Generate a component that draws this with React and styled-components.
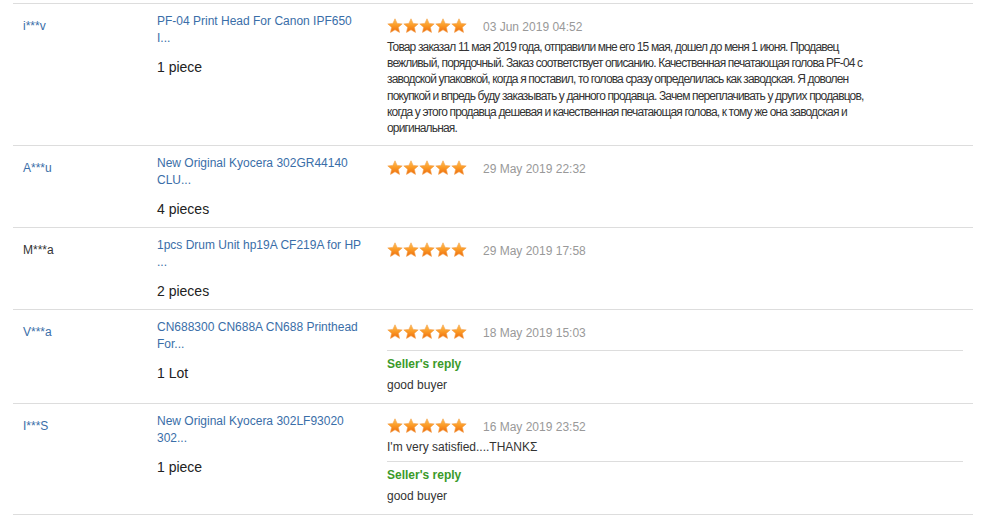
import React from 'react';
import styled, { createGlobalStyle } from 'styled-components';

const GlobalStyle = createGlobalStyle`
	html, body {
		margin: 0;
		padding: 0;
		background: #fff;
	}
	body {
		font-family: "Liberation Sans", Arial, sans-serif;
		color: #333;
	}
`;

const List = styled.div`
	padding: 3px 15px 0 13px;
	width: 960px;
`;

const Row = styled.div`
	display: grid;
	grid-template-columns: 144px 230px 1fr;
	border-top: 1px solid #ddd;
	padding: 9px 0 8px 0;
	&:last-child {
		border-bottom: 1px solid #ddd;
	}
`;

const Buyer = styled.div`
	padding: 5px 0 0 10px;
	font-size: 12px;
	line-height: 16px;
	color: ${props => props.plain ? '#333' : '#3a6ea8'};
`;

const Product = styled.div`
	display: flex;
	flex-direction: column;
`;

const Title = styled.a`
	display: block;
	width: 207px;
	font-size: 12px;
	line-height: 17px;
	color: #3a6ea8;
	text-decoration: none;
`;

const Quantity = styled.div`
	margin-top: 10px;
	font-size: 14px;
	line-height: 20px;
	color: #222;
`;

const Review = styled.div`
	padding: 4px 10px 1px 0;
	display: flex;
	flex-direction: column;
`;

const RatingLine = styled.div`
	display: flex;
	align-items: center;
	gap: 16px;
	height: 16px;
	margin-top: 1px;
`;

const Stars = styled.div`
	display: flex;
	width: 80px;
`;

const DateText = styled.span`
	font-size: 12px;
	color: #999;
	padding-top: 1px;
`;

const Feedback = styled.div`
	margin-top: 5px;
	font-size: 12px;
	line-height: 16.2px;
	color: #333;
	letter-spacing: ${props => props.tight ? '-0.84px' : '0'};
`;

const FeedbackLine = styled.span`
	display: block;
	white-space: nowrap;
`;

const Reply = styled.div`
	margin-top: ${props => props.afterText ? '6px' : '10px'};
	border-top: 1px solid #ddd;
	padding: 5px 0 1px 0;
`;

const ReplyLabel = styled.div`
	font-size: 12px;
	line-height: 16px;
	font-weight: 700;
	color: #3a9a2a;
`;

const ReplyText = styled.div`
	margin-top: 5px;
	font-size: 12px;
	line-height: 16px;
	color: #333;
`;

const Star = ({ id }) => (
	<svg width="16" height="16" viewBox="0 0 16 16">
		<defs>
			<linearGradient id={id} x1="0" y1="0" x2="0" y2="1">
				<stop offset="0" stopColor="#ffc25a" />
				<stop offset="0.5" stopColor="#fb9a26" />
				<stop offset="1" stopColor="#ec6a0c" />
			</linearGradient>
		</defs>
		<path
			d="M8 0.8 L10.1 5.4 L15.2 5.9 L11.4 9.3 L12.5 14.4 L8 11.8 L3.5 14.4 L4.6 9.3 L0.8 5.9 L5.9 5.4 Z"
			fill={`url(#${id})`}
			stroke="#f3a04a"
			strokeWidth="0.6"
			strokeLinejoin="round"
		/>
	</svg>
);

const reviews = [
	{
		buyer: 'i***v',
		title: 'PF-04 Print Head For Canon IPF650 I...',
		qty: '1 piece',
		date: '03 Jun 2019 04:52',
		tight: true,
		text: [
			'Товар заказал 11 мая 2019 года, отправили мне его 15 мая, дошел до меня 1 июня. Продавец',
			'вежливый, порядочный. Заказ соответствует описанию. Качественная печатающая голова PF-04 с',
			'заводской упаковкой, когда я поставил, то голова сразу определилась как заводская. Я доволен',
			'покупкой и впредь буду заказывать у данного продавца. Зачем переплачивать у других продавцов,',
			'когда у этого продавца дешевая и качественная печатающая голова, к тому же она заводская и',
			'оригинальная.',
		],
	},
	{
		buyer: 'A***u',
		title: 'New Original Kyocera 302GR44140 CLU...',
		qty: '4 pieces',
		date: '29 May 2019 22:32',
	},
	{
		buyer: 'M***a',
		plain: true,
		title: '1pcs Drum Unit hp19A CF219A for HP ...',
		qty: '2 pieces',
		date: '29 May 2019 17:58',
	},
	{
		buyer: 'V***a',
		title: 'CN688300 CN688A CN688 Printhead For...',
		qty: '1 Lot',
		date: '18 May 2019 15:03',
		reply: 'good buyer',
	},
	{
		buyer: 'I***S',
		title: 'New Original Kyocera 302LF93020 302...',
		qty: '1 piece',
		date: '16 May 2019 23:52',
		text: ["I'm very satisfied....THANKΣ"],
		reply: 'good buyer',
	},
];

const App = () => {
	return (
		<>
			<GlobalStyle />
			<List>
				{reviews.map((r, i) => (
					<Row key={i}>
						<Buyer plain={r.plain}>{r.buyer}</Buyer>
						<Product>
							<Title href="#">{r.title}</Title>
							<Quantity>{r.qty}</Quantity>
						</Product>
						<Review>
							<RatingLine>
								<Stars>
									{[0, 1, 2, 3, 4].map(s => <Star key={s} id={`star-${i}-${s}`} />)}
								</Stars>
								<DateText>{r.date}</DateText>
							</RatingLine>
							{r.text && (
								<Feedback tight={r.tight}>
									{r.text.map((line, j) => <FeedbackLine key={j}>{line}</FeedbackLine>)}
								</Feedback>
							)}
							{r.reply && (
								<Reply afterText={!!r.text}>
									<ReplyLabel>Seller's reply</ReplyLabel>
									<ReplyText>{r.reply}</ReplyText>
								</Reply>
							)}
						</Review>
					</Row>
				))}
			</List>
		</>
	);
};

export default App;
